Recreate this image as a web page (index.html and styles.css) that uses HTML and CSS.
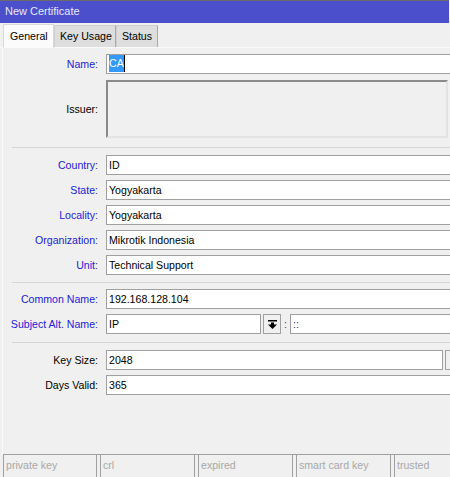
FILE: index.html
```html
<!DOCTYPE html>
<html lang="en">
<head>
	<meta charset="UTF-8">
	<title>New Certificate</title>
	<link rel="stylesheet" href="styles.css">
</head>
<body>
	<div class="window">
		<div class="titlebar">New Certificate</div>
		<div class="tabs">
			<span class="tab active">General</span>
			<span class="tab">Key Usage</span>
			<span class="tab">Status</span>
		</div>
		<div class="panel">
			<div class="row">
				<label class="lbl blue">Name:</label>
				<div class="field"><span class="sel">CA</span><span class="caret"></span></div>
			</div>
			<div class="row issuer">
				<label class="lbl">Issuer:</label>
				<div class="box"></div>
			</div>
			<div class="sep sep1"></div>
			<div class="row">
				<label class="lbl blue">Country:</label>
				<div class="field">ID</div>
			</div>
			<div class="row">
				<label class="lbl blue">State:</label>
				<div class="field">Yogyakarta</div>
			</div>
			<div class="row">
				<label class="lbl blue">Locality:</label>
				<div class="field">Yogyakarta</div>
			</div>
			<div class="row">
				<label class="lbl blue">Organization:</label>
				<div class="field">Mikrotik Indonesia</div>
			</div>
			<div class="row">
				<label class="lbl blue">Unit:</label>
				<div class="field">Technical Support</div>
			</div>
			<div class="sep sep2"></div>
			<div class="row">
				<label class="lbl blue">Common Name:</label>
				<div class="field">192.168.128.104</div>
			</div>
			<div class="row">
				<label class="lbl blue">Subject Alt. Name:</label>
				<div class="field short">IP</div>
				<div class="dropbtn">
					<svg width="9" height="9" viewBox="0 0 9 9">
						<rect x="0" y="0" width="9" height="1.5" fill="#000"/>
						<rect x="3" y="2.5" width="3" height="2.5" fill="#000"/>
						<polygon points="0,4.5 9,4.5 4.5,9" fill="#000"/>
					</svg>
				</div>
				<span class="colon">:</span>
				<div class="field addr">::</div>
			</div>
			<div class="sep sep3"></div>
			<div class="row">
				<label class="lbl">Key Size:</label>
				<div class="field keysize">2048</div>
				<div class="sidebox"></div>
			</div>
			<div class="row">
				<label class="lbl">Days Valid:</label>
				<div class="field">365</div>
			</div>
		</div>
		<div class="statusbar">
			<span class="stat">private key</span>
			<span class="stat">crl</span>
			<span class="stat">expired</span>
			<span class="stat">smart card key</span>
			<span class="stat">trusted</span>
		</div>
	</div>
</body>
</html>
```

FILE: styles.css
```css
*{margin:0;padding:0;box-sizing:border-box;}
body{background-color:#f0f0f0;width:450px;height:477px;overflow:hidden;font-family:"Liberation Sans",Arial,sans-serif;font-size:10.6px;color:#000;}
.window{width:450px;height:477px;overflow:hidden;display:flex;flex-direction:column;}
/*标题栏*/
.titlebar{height:23px;flex-shrink:0;border-top:1px solid #6a6a6a;background-color:#4b4fcb;color:#e8e8f8;padding-left:5px;line-height:21px;font-size:11px;width:449px;}
/*标签页*/
.tabs{height:25px;flex-shrink:0;display:flex;align-items:flex-end;padding-left:3px;border-bottom:1px solid #fafafa;}
.tab{height:22px;line-height:20px;padding:0 5px;white-space:nowrap;flex-shrink:0;background-color:#dedede;border:1px solid #cfcfcf;border-bottom:none;border-right-color:#a9a9a9;}
.tab:nth-child(2){width:62px;}
.tab:nth-child(3){width:42px;}
.tab.active{width:51px;height:24px;line-height:22px;background-color:#fbfbfb;border-color:#d9d9d9;padding:0 6px;margin-bottom:-1px;}
/*表单*/
.panel{height:406px;flex-shrink:0;padding-top:6px;border-left:1px solid #fafafa;margin-left:2px;display:flex;flex-direction:column;overflow:hidden;}
.row{display:flex;align-items:center;height:20px;flex-shrink:0;margin-bottom:5px;margin-right:-4px;}
.lbl{width:95px;text-align:right;margin-right:8px;white-space:nowrap;}
.blue{color:#2222dd;}
.field{height:20px;line-height:18px;flex:1;background-color:#fff;border:1px solid #a0a0a0;padding-left:2px;white-space:nowrap;}
.sel{background-color:#3399ff;color:#fff;display:inline-block;height:17px;line-height:17px;vertical-align:top;}
.caret{display:inline-block;width:1px;height:17px;background-color:#000;vertical-align:top;}
.row.issuer{height:58px;margin-top:1px;margin-bottom:0;}
.issuer .box{width:342px;height:58px;background-color:#f0f0f0;border:2px solid #e3e3e3;border-top-color:#8a8a8a;border-left-color:#8a8a8a;}
.sep{height:1px;flex-shrink:0;background-color:#d6d6d6;margin-left:9px;}
.sep1{margin-top:9px;margin-bottom:7px;}
.sep2{margin-top:2px;margin-bottom:6px;}
.sep3{margin-top:3px;margin-bottom:7px;}
.field.short{flex:none;width:155px;}
.dropbtn{width:18px;height:20px;margin-left:2px;border:1px solid #a0a0a0;background-color:#f0f0f0;display:flex;align-items:center;justify-content:center;}
.colon{width:9px;text-align:center;color:#702070;}
.field.addr{color:#303080;}
.field.keysize{flex:none;width:337px;}
.sidebox{flex:1;height:20px;margin-left:2px;border:1px solid #a0a0a0;background-color:#f0f0f0;}
/*状态栏*/
.statusbar{height:23px;flex-shrink:0;display:flex;gap:3px;margin-left:3px;border-top:1px solid #a0a0a0;overflow:hidden;}
.stat{width:94px;flex-shrink:0;height:22px;line-height:20px;padding-left:2px;color:#a8a8a8;border-left:1px solid #a0a0a0;border-right:1px solid #a0a0a0;white-space:nowrap;}
.stat:nth-child(n+2){width:95px;}
```
